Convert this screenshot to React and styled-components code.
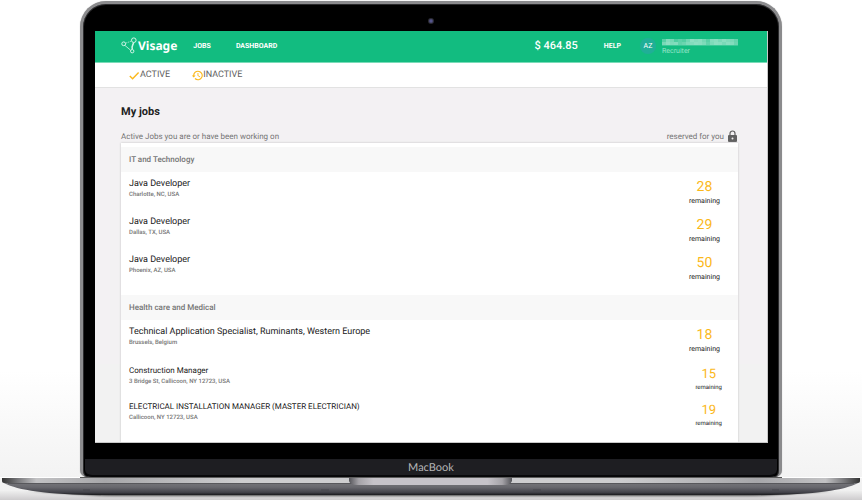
import React from "react";
import styled, { createGlobalStyle } from "styled-components";

const GlobalStyle = createGlobalStyle`
  * { box-sizing: border-box; }
  body {
    margin: 0;
    background: #fff;
    font-family: Roboto, "Liberation Sans", sans-serif;
    color: #212121;
    text-rendering: geometricPrecision;
  }
  h1, h2, h3, p, ul { margin: 0; padding: 0; }
  ul { list-style: none; }
  a { color: inherit; text-decoration: none; }
`;

const Page = styled.div`
  display: flex;
  flex-direction: column;
  padding-top: 1px;
  background: linear-gradient(#fff 0, #fff 74%, #f3f3f3 95%, #eee 100%);
`;

const Lid = styled.div`
  margin: 0 80px;
  padding: 27px 11px 0 12px;
  background: #000;
  border: solid #8b8b8d;
  border-width: 3px 3px 0;
  border-radius: 26px 26px 7px 7px;
  box-shadow: inset 0 0 0 1px #2b2b2d, 0 0 1px #aaa;
  position: relative;
`;

const Camera = styled.span`
  position: absolute;
  top: 14px;
  left: 50%;
  width: 6px;
  height: 6px;
  margin-left: -3px;
  border-radius: 50%;
  background: radial-gradient(#55558c 0 25%, #2b2b33 60%);
`;

const Screen = styled.div`
  background: linear-gradient(#f3f1f3 0 81%, #f2f2f2 81%);
  border: solid #c8c8c8;
  border-width: 0 1px 1px 0;
`;

const Header = styled.header`
  display: flex;
  align-items: center;
  height: 32px;
  padding: 0 29px 2px 26px;
  background: #12bc80;
  border-bottom: 1px solid #7adbb8;
  color: #fff;
`;

const Brand = styled.a`
  display: flex;
  align-items: center;
  gap: 1px;
  margin-right: 16px;
  font: 700 12px/16px "Noto Sans", "Open Sans", sans-serif;
`;

const Nav = styled.nav`
  display: flex;
  gap: 25px;
  flex: 1;
`;

const NavLink = styled.a`
  font-size: 7px;
  line-height: 10px;
  font-weight: 700;
`;

const Balance = styled.span`
  margin-right: 26px;
  font-size: 11px;
  line-height: 14px;
  font-weight: 500;
`;

const Profile = styled.div`
  display: flex;
  align-items: center;
  gap: 6px;
  margin-left: 19px;
`;

const Avatar = styled.span`
  width: 16px;
  height: 16px;
  border-radius: 50%;
  background: #20af97;
  font-size: 7px;
  line-height: 16px;
  text-align: center;
`;

const Identity = styled.div`
  display: flex;
  flex-direction: column;
  gap: 1px;
  padding-top: 3px;
  font-size: 7px;
  line-height: 9px;
  color: #9ae5ca;
`;

const Tabs = styled.nav`
  display: flex;
  align-items: center;
  gap: 22px;
  height: 25px;
  padding: 0 34px;
  background: #fff;
  border-bottom: 1px solid #e2e2e2;
`;

const Tab = styled.a`
  display: flex;
  align-items: center;
  font-size: 9px;
  line-height: 12px;
  color: #616161;
`;

const TabIcon = styled.svg`
  width: 11px;
  height: 11px;
  flex: none;
`;

const Main = styled.main`
  padding: 17px 29px 0 26px;
`;

const Heading = styled.h1`
  font-size: 11px;
  line-height: 14px;
  font-weight: 700;
`;

const ListCaption = styled.div`
  display: flex;
  align-items: center;
  justify-content: space-between;
  height: 13px;
  margin-top: 11px;
  font-size: 8px;
  line-height: 10px;
  color: #757575;
`;

const Reserved = styled.span`
  display: flex;
  align-items: center;
  gap: 3px;
`;

const Card = styled.div`
  padding: 4px 0 12px;
  background: #fff;
  box-shadow: 0 0 2px #bdbdbd;
  clip-path: inset(-2px -3px 0);
`;

const SectionTitle = styled.h2`
  padding: 0 8px;
  background: #f8f8f8;
  font-size: 8px;
  line-height: 25px;
  font-weight: 500;
  color: #757575;
`;

const JobList = styled.ul`
  padding-bottom: ${(p) => (p.$last ? 0 : 9)}px;
`;

const JobRow = styled.li`
  display: flex;
  justify-content: space-between;
  height: ${(p) => (p.$compact ? 36 : 38)}px;
  padding: ${(p) => (p.$compact ? "7px 16px 0 8px" : "6px 18px 0 8px")};
`;

const JobTitle = styled.h3`
  font-size: ${(p) => (p.$compact ? 8 : 9)}px;
  line-height: 12px;
  font-weight: 400;
`;

const Place = styled.p`
  font-size: 6px;
  line-height: 10px;
  font-weight: 500;
  color: #757575;
`;

const Remaining = styled.div`
  padding-top: 2px;
  text-align: center;
  font-size: ${(p) => (p.$compact ? 6 : 7)}px;
  line-height: 12px;
`;

const Count = styled.strong`
  display: block;
  font-size: ${(p) => (p.$compact ? 13 : 14)}px;
  line-height: 15px;
  font-weight: 400;
  color: #fbb81b;
`;

const Chin = styled.div`
  margin: 16px -9px 0 -10px;
  height: 18px;
  background: #1e1e22;
  border-bottom: 2px solid #08080a;
  border-radius: 0 0 7px 7px;
  font: 400 11px/18px Lato, "Open Sans", sans-serif;
  color: #b5b5b7;
  text-align: center;
`;

const Base = styled.svg`
  display: block;
  width: 100%;
  height: 24px;
`;

const sections = [
  {
    name: "IT and Technology",
    jobs: [
      { title: "Java Developer", place: "Charlotte, NC, USA", left: 28 },
      { title: "Java Developer", place: "Dallas, TX, USA", left: 29 },
      { title: "Java Developer", place: "Phoenix, AZ, USA", left: 50 },
    ],
  },
  {
    name: "Health care and Medical",
    jobs: [
      { title: "Technical Application Specialist, Ruminants, Western Europe", place: "Brussels, Belgium", left: 18 },
      { title: "Construction Manager", place: "3 Bridge St, Callicoon, NY 12723, USA", left: 15, compact: true },
      { title: "ELECTRICAL INSTALLATION MANAGER (MASTER ELECTRICIAN)", place: "Callicoon, NY 12723, USA", left: 19, compact: true },
    ],
  },
];

const LogoMark = () => (
  <svg width="16" height="17" viewBox="0 0 16 17" fill="none" stroke="#d3f5e8" aria-hidden="true">
    <circle cx="2.7" cy="6.8" r="1.9" />
    <circle cx="12.8" cy="3.2" r="2.3" />
    <circle cx="11.2" cy="14.2" r="1.7" />
    <path d="M4.7 6.2 10 4.2" strokeWidth=".7" strokeDasharray="1.5 .7" />
    <path d="m4 8.5 5.6 4.7" strokeWidth=".8" />
    <path d="M12.5 5.6c-.2 2.5-2.2 3.2-1.2 6.6" strokeWidth="1.5" />
  </svg>
);

const blurRow = (y, tones) =>
  tones.map((t, i) => <rect key={`${y}-${i}`} x={i * 4} y={y} width="4" height="3" fill="#fff" opacity={t / 100} />);

const HiddenName = () => (
  <svg width="76" height="7" viewBox="0 0 76 7" role="img" aria-label="Name hidden">
    {blurRow(0, [30, 48, 42, 26, 32, 28, 40, 52, 48, 50, 42, 30, 48, 50, 44, 50, 46, 44, 36])}
    {blurRow(3, [44, 52, 46, 48, 34, 38, 46, 48, 52, 50, 46, 34, 46, 52, 50, 44, 50, 48, 38])}
    <rect y="6" width="76" height="1" fill="#fff" opacity=".18" />
  </svg>
);

const LaptopBase = () => (
  <Base viewBox="0 0 862 24" preserveAspectRatio="none" aria-hidden="true">
    <defs>
      <linearGradient id="rim">
        <stop offset="0" stopColor="#333" />
        <stop offset=".018" stopColor="#77777a" />
        <stop offset=".04" stopColor="#c2c2c4" />
        <stop offset=".12" stopColor="#a7a7aa" />
        <stop offset=".28" stopColor="#cdcdcf" />
        <stop offset=".72" stopColor="#cdcdcf" />
        <stop offset=".88" stopColor="#a7a7aa" />
        <stop offset=".96" stopColor="#c2c2c4" />
        <stop offset=".982" stopColor="#77777a" />
        <stop offset="1" stopColor="#333" />
      </linearGradient>
      <linearGradient id="body" x2="0" y2="1">
        <stop offset="0" stopColor="#77777b" />
        <stop offset=".4" stopColor="#68686e" />
        <stop offset=".8" stopColor="#424249" />
        <stop offset="1" stopColor="#19191c" />
      </linearGradient>
      <linearGradient id="ground" x2="0" y2="1">
        <stop offset="0" stopColor="#eeeeee" />
        <stop offset="1" stopColor="#cac8ca" />
      </linearGradient>
      <linearGradient id="notch">
        <stop offset="0" stopColor="#55555a" />
        <stop offset=".06" stopColor="#a5a3a8" />
        <stop offset=".15" stopColor="#c6c3c9" />
        <stop offset=".85" stopColor="#c6c3c9" />
        <stop offset=".94" stopColor="#a5a3a8" />
        <stop offset="1" stopColor="#55555a" />
      </linearGradient>
      <filter id="soft" x="-10%" y="-100%" width="120%" height="300%">
        <feGaussianBlur stdDeviation="7 1" />
      </filter>
    </defs>
    <rect y="14" width="862" height="10" fill="url(#ground)" />
    <path d="M35 14H827L760 18.5H102Z" fill="#111" filter="url(#soft)" />
    <path d="M2 5C14 12 38 17 92 18H770C824 17 848 12 860 5Z" fill="url(#body)" />
    <path d="M2 1H860V4Q860 6 856 6H6Q2 6 2 4Z" fill="url(#rim)" />
    <path d="M8 6.5H854" stroke="#58585c" />
    <path d="M0 .5H80M782 .5H862" stroke="#fff" />
    <path d="M80 .5H782" stroke="#555" />
    <path d="M349 1H512V4Q511 8 504 8H357Q350 8 349 4Z" fill="url(#notch)" />
    <path d="M83 13H90M321 13H329M533 13H541M772 13H779" stroke="#46464c" />
  </Base>
);

const Job = ({ job }) => (
  <JobRow $compact={job.compact}>
    <div>
      <JobTitle $compact={job.compact}>{job.title}</JobTitle>
      <Place>{job.place}</Place>
    </div>
    <Remaining $compact={job.compact}>
      <Count $compact={job.compact}>{job.left}</Count>
      remaining
    </Remaining>
  </JobRow>
);

export default function App() {
  return (
    <>
      <GlobalStyle />
      <Page>
        <Lid>
          <Camera />
          <Screen>
            <Header>
              <Brand href="#"><LogoMark />Visage</Brand>
              <Nav>
                <NavLink href="#jobs">JOBS</NavLink>
                <NavLink href="#dashboard">DASHBOARD</NavLink>
              </Nav>
              <Balance>$ 464.85</Balance>
              <NavLink href="#help">HELP</NavLink>
              <Profile>
                <Avatar>AZ</Avatar>
                <Identity><HiddenName />Recruiter</Identity>
              </Profile>
            </Header>
            <Tabs>
              <Tab href="#active">
                <TabIcon viewBox="0 0 11 11" fill="none" stroke="#fbb81b" strokeWidth="1.4" aria-hidden="true">
                  <path d="M.8 6 3.6 8.8 9.6 2.5" />
                </TabIcon>
                ACTIVE
              </Tab>
              <Tab href="#inactive">
                <TabIcon viewBox="0 0 24 24" fill="#fbb81b" aria-hidden="true">
                  <path d="M13 1.5A10.5 10.5 0 0 0 2.5 12H-.5l4.3 4.4L8 12H5a8 8 0 1 1 2.4 5.7l-1.8 1.8A10.5 10.5 0 1 0 13 1.5Zm-1 5.3v6l5 3 1-1.6-4-2.3V6.800Z" />
                </TabIcon>
                INACTIVE
              </Tab>
            </Tabs>
            <Main>
              <Heading>My jobs</Heading>
              <ListCaption>
                <span>Active Jobs you are or have been working on</span>
                <Reserved>
                  reserved for you
                  <svg width="11" height="13" viewBox="0 0 11 13" aria-hidden="true">
                    <path d="M3 6V3.500a2.500 2.500 0 0 1 5 0V6" fill="none" stroke="#616161" strokeWidth="1.2" />
                    <rect x="1" y="5" width="9" height="7" rx="1" fill="#616161" />
                    <circle cx="5.500" cy="8.500" r="1" fill="#f3f1f3" />
                  </svg>
                </Reserved>
              </ListCaption>
              <Card>
                {sections.map((s, i) => (
                  <section key={s.name}>
                    <SectionTitle>{s.name}</SectionTitle>
                    <JobList $last={i === sections.length - 1}>
                      {s.jobs.map((job) => <Job key={job.place} job={job} />)}
                    </JobList>
                  </section>
                ))}
              </Card>
            </Main>
          </Screen>
          <Chin>MacBook</Chin>
        </Lid>
        <LaptopBase />
      </Page>
    </>
  );
}
